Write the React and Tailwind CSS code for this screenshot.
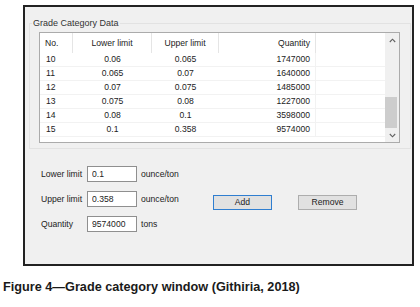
const ROWS = [
  { no: '10', lower: '0.06', upper: '0.065', qty: '1747000' },
  { no: '11', lower: '0.065', upper: '0.07', qty: '1640000' },
  { no: '12', lower: '0.07', upper: '0.075', qty: '1485000' },
  { no: '13', lower: '0.075', upper: '0.08', qty: '1227000' },
  { no: '14', lower: '0.08', upper: '0.1', qty: '3598000' },
  { no: '15', lower: '0.1', upper: '0.358', qty: '9574000' },
];

const FIELDS = [
  { label: 'Lower limit', value: '0.1', unit: 'ounce/ton' },
  { label: 'Upper limit', value: '0.358', unit: 'ounce/ton' },
  { label: 'Quantity', value: '9574000', unit: 'tons' },
];

function Chevron({ down }) {
  return (
    <svg width="7" height="5" viewBox="0 0 7 5" className="text-[#606060]">
      <path
        d={down ? 'M0.8 1L3.5 3.8L6.2 1' : 'M0.8 4L3.5 1.2L6.2 4'}
        fill="none"
        stroke="currentColor"
        strokeWidth="1.1"
      />
    </svg>
  );
}

export default function App() {
  return (
    <div className="min-h-screen bg-white font-['Liberation_Sans',Arial,sans-serif] text-[#222]">
      <div className="h-[5px]" />
      {/* window */}
      <div className="ml-[23px] h-[261px] w-[391px] border-2 border-[#222] bg-[#f0f0f0]">
        {/* group box */}
        <div className="relative ml-[4px] mt-[16px] h-[126px] w-[382px] border border-[#e2e2e2]">
          <span className="absolute -top-[7px] left-[2px] bg-[#f0f0f0] px-[1px] text-[9px] leading-[12px] text-[#333]">
            Grade Category Data
          </span>

          {/* list view */}
          <div className="ml-[9px] mt-[8px] flex h-[111px] w-[361px] border border-[#ababab] bg-white text-[8.6px] text-[#222]">
            <div className="flex flex-1 flex-col">
              <div className="flex h-[20px] items-center">
                <div className="flex h-full w-[33px] items-center border-r border-[#e5e5e5] pl-[5px]">No.</div>
                <div className="flex h-full w-[79px] items-center justify-center border-r border-[#e5e5e5]">Lower limit</div>
                <div className="flex h-full w-[67px] items-center justify-center border-r border-[#e5e5e5]">Upper limit</div>
                <div className="flex h-full w-[97px] items-center justify-end border-r border-[#e5e5e5] pr-[5px]">Quantity</div>
              </div>
              {ROWS.map((r) => (
                <div key={r.no} className="flex h-[14px] items-center border-b border-[#f2f2f2]">
                  <div className="w-[33px] pl-[6px]">{r.no}</div>
                  <div className="w-[79px] text-center">{r.lower}</div>
                  <div className="w-[67px] text-center">{r.upper}</div>
                  <div className="flex h-full w-[97px] items-center justify-end border-r border-[#f2f2f2] pr-[5px]">{r.qty}</div>
                </div>
              ))}
            </div>
            {/* scrollbar */}
            <div className="flex w-[14px] flex-col bg-[#f0f0f0]">
              <div className="flex h-[14px] items-center justify-center">
                <Chevron />
              </div>
              <div className="flex-1" />
              <div className="mr-[2px] h-[31px] bg-[#cdcdcd]" />
              <div className="flex h-[14px] items-center justify-center">
                <Chevron down />
              </div>
            </div>
          </div>
        </div>

        {/* form */}
        <div className="ml-[16px] mt-[17px] flex">
          <div className="flex w-[172px] flex-col gap-[9px]">
            {FIELDS.map((f) => (
              <div key={f.label} className="flex items-center text-[8.6px]">
                <span className="w-[46px]">{f.label}</span>
                <input
                  readOnly
                  value={f.value}
                  className="h-[16px] w-[50px] border border-[#8f8f8f] bg-white px-[4px] text-[8.6px] text-[#222] outline-none"
                />
                <span className="ml-[4px]">{f.unit}</span>
              </div>
            ))}
          </div>
          <div className="flex gap-[26px] pt-[29px]">
            <button className="h-[15px] w-[59px] border border-[#2f7ed0] bg-[#e1e1e1] text-[8.6px] leading-none text-[#222]">
              Add
            </button>
            <button className="h-[15px] w-[59px] border border-[#adadad] bg-[#e1e1e1] text-[8.6px] leading-none text-[#222]">
              Remove
            </button>
          </div>
        </div>
      </div>

      <p className="ml-[3px] mt-[14px] text-[12.7px] font-bold leading-[15px] text-[#1a1a1a]">
        Figure 4—Grade category window (Githiria, 2018)
      </p>
    </div>
  );
}
